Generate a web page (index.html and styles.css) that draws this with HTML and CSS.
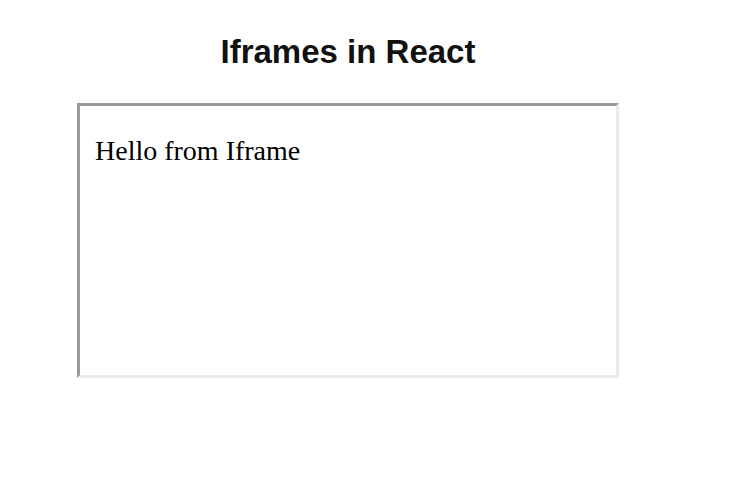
FILE: index.html
```html
<!DOCTYPE html>
<html>
<head>
<meta charset="utf-8">
<link rel="stylesheet" href="styles.css">
</head>
<body>
<div class="app">
  <h1 class="title">Iframes in React</h1>
  <div class="frame">
    <p class="frame-text">Hello from Iframe</p>
  </div>
</div>
</body>
</html>
```
FILE: styles.css
```css
html, body {
  margin: 0;
  padding: 0;
  background: #ffffff;
}
.app {
  width: 696px;
  display: flex;
  flex-direction: column;
  align-items: center;
  padding-top: 33px;
}
.title {
  margin: 0;
  font-family: "Liberation Sans", Arial, sans-serif;
  font-weight: bold;
  font-size: 33px;
  line-height: 38px;
  color: #111;
}
.frame {
  margin-top: 32px;
  box-sizing: border-box;
  width: 542px;
  height: 275px;
  border-style: solid;
  border-width: 3px;
  border-color: #9a9a9a #ebebeb #ebebeb #9a9a9a;
  padding: 29px 15px 14px;
}
.frame-text {
  margin: 0;
  font-family: "Liberation Serif", "Times New Roman", serif;
  font-size: 28px;
  line-height: 32px;
  color: #000;
}
```
